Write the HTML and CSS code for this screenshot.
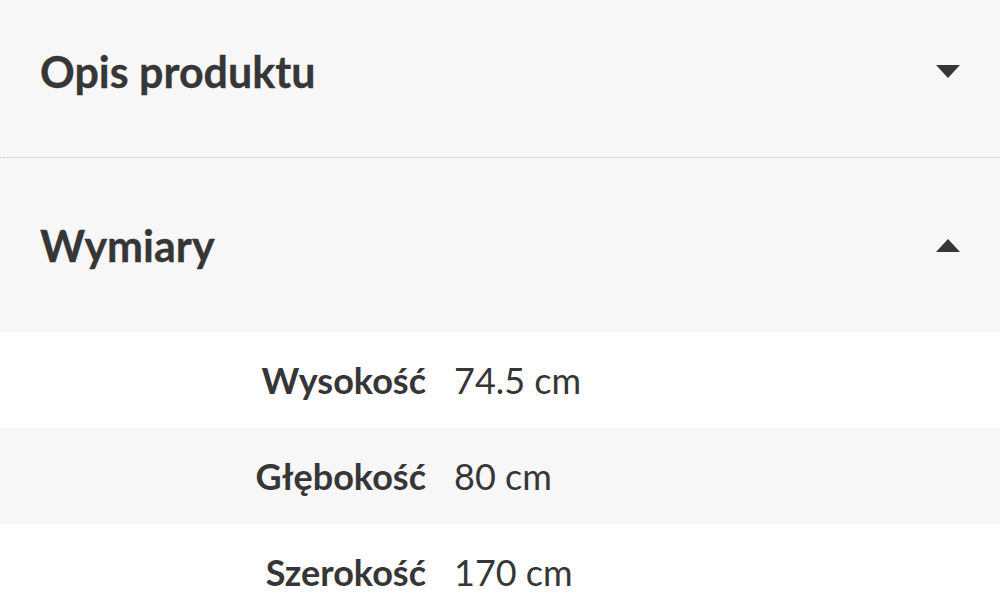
FILE: index.html
```html
<!DOCTYPE html>
<html lang="pl">
<head>
<meta charset="utf-8">
<link rel="stylesheet" href="styles.css">
</head>
<body>
<div class="accordion">
  <div class="acc-head first">
    <h2 class="acc-title">Opis produktu</h2>
    <span class="tri down"></span>
  </div>
  <div class="acc-head second">
    <h2 class="acc-title">Wymiary</h2>
    <span class="tri up"></span>
  </div>
  <div class="specs">
    <div class="row"><span class="label">Wysokość</span><span class="value">74.5 cm</span></div>
    <div class="row alt"><span class="label">Głębokość</span><span class="value">80 cm</span></div>
    <div class="row"><span class="label">Szerokość</span><span class="value">170 cm</span></div>
  </div>
</div>
</body>
</html>
```
FILE: styles.css
```css
html, body {
  margin: 0;
  padding: 0;
  background: #f7f7f7;
  font-family: Lato, "Open Sans", sans-serif;
  color: #363636;
}
.accordion {
  display: flex;
  flex-direction: column;
}
.acc-head {
  display: flex;
  align-items: center;
  justify-content: space-between;
  padding: 0 40px;
  box-sizing: border-box;
}
.acc-head.first {
  height: 158px;
  padding-bottom: 14px;
  border-bottom: 1px dotted #c8c8c8;
}
.acc-head.second {
  height: 174px;
}
.acc-title {
  margin: 0;
  font-size: 43px;
  font-weight: 700;
  line-height: 1;
  -webkit-text-stroke: 0.3px #363636;
}
.tri {
  width: 0;
  height: 0;
  border-left: 12px solid transparent;
  border-right: 12px solid transparent;
}
.tri.down { border-top: 13px solid #363636; }
.tri.up { border-bottom: 13px solid #363636; }
.specs {
  background: #fff;
}
.row {
  display: grid;
  grid-template-columns: 426px 1fr;
  column-gap: 28px;
  align-items: center;
  height: 96px;
  font-size: 36px;
}
.row.alt { background: #f7f7f7; }
.label {
  text-align: right;
  font-weight: 700;
}
.value { font-weight: 400; }
```
